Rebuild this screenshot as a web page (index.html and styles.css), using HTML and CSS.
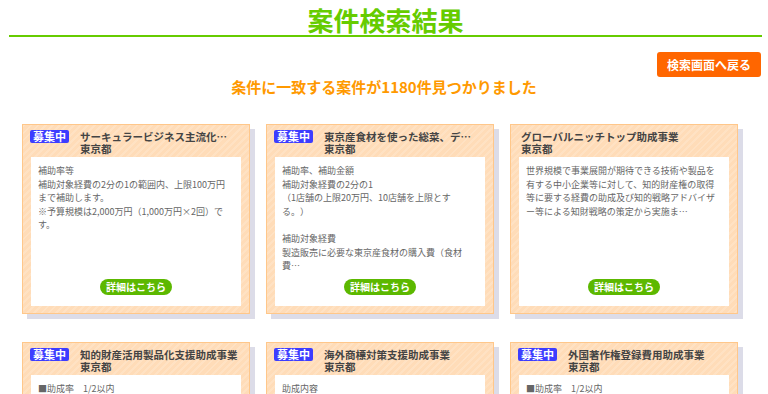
FILE: index.html
```html
<!DOCTYPE html>
<html lang="ja">
<head>
<meta charset="utf-8">
<title>案件検索結果</title>
<link rel="stylesheet" href="styles.css">
</head>
<body>
<h1 class="page-title">案件検索結果</h1>
<div class="toolbar">
  <a class="back-btn" href="#">検索画面へ戻る</a>
</div>
<p class="result-count">条件に一致する案件が1180件見つかりました</p>
<div class="card-grid">
  <div class="card">
    <div class="card-head">
      <span class="badge">募集中</span>
      <div class="card-title">サーキュラービジネス主流化…<br>東京都</div>
    </div>
    <div class="card-body">
      <div class="card-text">補助率等<br>補助対象経費の2分の1の範囲内、上限100万円まで補助します。<br>※予算規模は2,000万円（1,000万円×2回）です。</div>
      <div class="btn-row"><a class="detail-btn" href="#">詳細はこちら</a></div>
    </div>
  </div>
  <div class="card">
    <div class="card-head">
      <span class="badge">募集中</span>
      <div class="card-title">東京産食材を使った総菜、デ…<br>東京都</div>
    </div>
    <div class="card-body">
      <div class="card-text">補助率、補助金額<br>補助対象経費の2分の1<br>（1店舗の上限20万円、10店舗を上限とする。）<br><br>補助対象経費<br>製造販売に必要な東京産食材の購入費（食材費…</div>
      <div class="btn-row"><a class="detail-btn" href="#">詳細はこちら</a></div>
    </div>
  </div>
  <div class="card">
    <div class="card-head no-badge">
      <div class="card-title">グローバルニッチトップ助成事業<br>東京都</div>
    </div>
    <div class="card-body">
      <div class="card-text">世界規模で事業展開が期待できる技術や製品を有する中小企業等に対して、知的財産権の取得等に要する経費の助成及び知的戦略アドバイザー等による知財戦略の策定から実施ま…</div>
      <div class="btn-row"><a class="detail-btn" href="#">詳細はこちら</a></div>
    </div>
  </div>
  <div class="card">
    <div class="card-head">
      <span class="badge">募集中</span>
      <div class="card-title">知的財産活用製品化支援助成事業<br>東京都</div>
    </div>
    <div class="card-body">
      <div class="card-text">■助成率　1/2以内<br>■助成限度額　1,500万円</div>
      <div class="btn-row"><a class="detail-btn" href="#">詳細はこちら</a></div>
    </div>
  </div>
  <div class="card">
    <div class="card-head">
      <span class="badge">募集中</span>
      <div class="card-title">海外商標対策支援助成事業<br>東京都</div>
    </div>
    <div class="card-body">
      <div class="card-text">助成内容<br>海外での商標の先行登録への対策に要する経費の一部を助成します。</div>
      <div class="btn-row"><a class="detail-btn" href="#">詳細はこちら</a></div>
    </div>
  </div>
  <div class="card">
    <div class="card-head">
      <span class="badge">募集中</span>
      <div class="card-title">外国著作権登録費用助成事業<br>東京都</div>
    </div>
    <div class="card-body">
      <div class="card-text">■助成率　1/2以内<br>■助成限度額　30万円</div>
      <div class="btn-row"><a class="detail-btn" href="#">詳細はこちら</a></div>
    </div>
  </div>
</div>
</body>
</html>
```
FILE: styles.css
```css
html, body {
  margin: 0;
  padding: 0;
  background: #ffffff;
}
body {
  font-family: "Noto Sans CJK JP", "Noto Sans", sans-serif;
  color: #444444;
}
.page-title {
  margin: 0 6px 0 9px;
  padding-top: 5px;
  font-size: 26px;
  line-height: 30px;
  font-weight: bold;
  text-align: center;
  color: #66cc00;
  border-bottom: 2px solid #66cc00;
}
.toolbar {
  display: flex;
  justify-content: flex-end;
  padding: 15px 7px 0 0;
}
.back-btn {
  display: block;
  background: #ff6600;
  color: #ffffff;
  font-size: 12px;
  font-weight: bold;
  line-height: 25px;
  height: 25px;
  padding: 0 10px;
  border-radius: 3px;
  text-decoration: none;
}
.result-count {
  margin: 0;
  text-align: center;
  font-size: 15px;
  line-height: 20px;
  font-weight: bold;
  color: #ff9900;
}
.card-grid {
  display: grid;
  grid-template-columns: repeat(3, 228px);
  column-gap: 16px;
  row-gap: 28px;
  margin: 27px 0 0 22px;
}
.card {
  box-sizing: border-box;
  height: 190px;
  border: 1px solid #ffc78a;
  background-color: #ffdcb8;
  background-image: repeating-linear-gradient(135deg, rgba(255,255,255,0.16) 0 2px, rgba(255,255,255,0) 2px 5px);
  box-shadow: 5px 5px 0 #dcdce8;
  display: flex;
  flex-direction: column;
}
.card-head {
  display: flex;
  align-items: flex-start;
  height: 32px;
  box-sizing: border-box;
  padding: 5px 8px 0 7px;
}
.card-head.no-badge {
  padding-left: 10px;
}
.badge {
  flex: none;
  width: 39px;
  height: 13px;
  line-height: 13px;
  text-align: center;
  background: #3d3dff;
  color: #ffffff;
  font-size: 11px;
  font-weight: bold;
  border-radius: 2px;
  margin-right: 11px;
}
.card-title {
  font-size: 10.5px;
  line-height: 12px;
  font-weight: bold;
  color: #444444;
  white-space: nowrap;
  padding-top: 1px;
}
.card-body {
  flex: 1;
  margin: 0 8px 7px 8px;
  background: #ffffff;
  padding: 7px 12px 11px 7px;
  display: flex;
  flex-direction: column;
  min-height: 0;
}
.card-text {
  flex: 1;
  font-size: 9px;
  line-height: 13.6px;
  color: #666666;
  overflow: hidden;
  text-spacing-trim: space-all;
}
.btn-row {
  display: flex;
  justify-content: center;
  margin-right: -5px;
}
.detail-btn {
  display: block;
  background: #5cb800;
  color: #ffffff;
  font-size: 10px;
  font-weight: bold;
  line-height: 16px;
  height: 16px;
  padding: 0 6px;
  border-radius: 8px;
  text-decoration: none;
}
```
